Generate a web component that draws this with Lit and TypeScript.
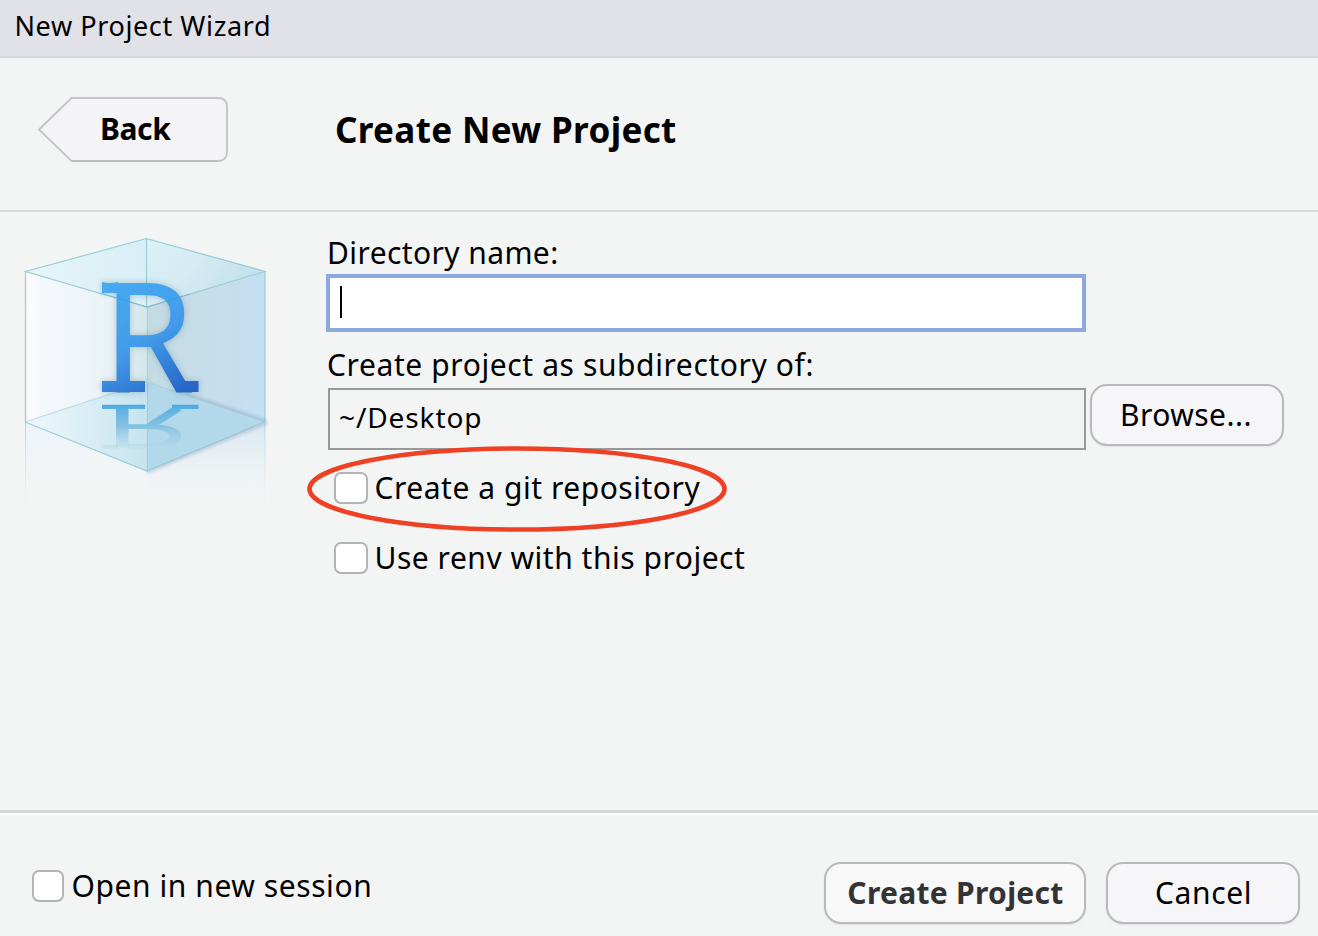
import { LitElement, html, css } from "lit";
import { customElement } from "lit/decorators.js";

@customElement("rstudio-cube")
class RstudioCube extends LitElement {
  static styles = css`
    :host { display: block; width: 300px; height: 310px; }
    svg { display: block; }
    .r { font-family: "Noto Sans", sans-serif; font-size: 154px; }
    .mark { filter: drop-shadow(0 0 3px rgba(60, 110, 130, .35)); }
  `;
  render() {
    return html`<svg width="300" height="310" viewBox="0 220 300 310">
      <defs>
        <linearGradient id="left" x1="0" x2="1" y1="0" y2="0"><stop offset="0" stop-color="#f0f4f9"/><stop offset=".04" stop-color="#fdfdff"/><stop offset=".12" stop-color="#f5f8fc"/><stop offset=".5" stop-color="#eff5f9"/><stop offset=".75" stop-color="#e6f1f5"/><stop offset="1" stop-color="#d3e6e9"/></linearGradient>
        <linearGradient id="right" x1="0" x2="1" y1="0" y2="0"><stop offset="0" stop-color="#c5dbe2"/><stop offset=".4" stop-color="#c6dde9"/><stop offset="1" stop-color="#c5dff3"/></linearGradient>
        <linearGradient id="topL" x1="0" x2="1" y1="0" y2="0"><stop offset="0" stop-color="#e6f5fa"/><stop offset="1" stop-color="#d9eef5"/></linearGradient>
        <linearGradient id="topR" x1="0" x2="1" y1="0" y2=".5"><stop offset="0" stop-color="#dcf0f6"/><stop offset=".5" stop-color="#d5eaf3"/><stop offset="1" stop-color="#bfe0ea"/></linearGradient>
        <linearGradient id="floorL" x1="0" x2="1" y1="0" y2="0"><stop offset="0" stop-color="#eef7fc"/><stop offset="1" stop-color="#c6e4ee"/></linearGradient>
        <linearGradient id="glyph" gradientUnits="userSpaceOnUse" x1="112" y1="288" x2="170" y2="398"><stop offset="0" stop-color="#46a9f2"/><stop offset=".5" stop-color="#429bea"/><stop offset="1" stop-color="#2766c6"/></linearGradient>
        <linearGradient id="glyphText" gradientUnits="userSpaceOnUse" x1="10" y1="-104" x2="70" y2="6"><stop offset="0" stop-color="#46a9f2"/><stop offset=".5" stop-color="#429bea"/><stop offset="1" stop-color="#2766c6"/></linearGradient>
        <linearGradient id="fadeL" x1="0" x2="0" y1="0" y2="1"><stop offset="0" stop-color="#edf3f9"/><stop offset="1" stop-color="#f3f5f5" stop-opacity="0"/></linearGradient>
        <linearGradient id="fadeR" gradientUnits="userSpaceOnUse" x1="0" x2="0" y1="422" y2="516"><stop offset="0" stop-color="#d9e8f3"/><stop offset="1" stop-color="#f3f5f5" stop-opacity="0"/></linearGradient>
        <linearGradient id="edge" gradientUnits="userSpaceOnUse" x1="0" x2="0" y1="422" y2="512"><stop offset="0" stop-color="#b5d5e0"/><stop offset="1" stop-color="#d5e3e8" stop-opacity="0"/></linearGradient>
        <linearGradient id="echo" gradientUnits="userSpaceOnUse" x1="0" x2="0" y1="392" y2="282"><stop offset="0" stop-color="#4ca8e0"/><stop offset=".12" stop-color="#5fb3e2"/><stop offset=".5" stop-color="#86c2e2"/><stop offset="1" stop-color="#b2d8e9" stop-opacity=".3"/></linearGradient>
        <filter id="soft" x="-20%" y="-20%" width="140%" height="140%"><feGaussianBlur stdDeviation="1.5"/></filter>
      </defs>
      <path d="M25 422L147 471V518H25Z" fill="url(#fadeL)"/>
      <path d="M147 471L265 422V518H147Z" fill="url(#fadeR)"/>
      <rect x="25" y="422" width="1" height="90" fill="url(#edge)"/>
      <rect x="264.500" y="422" width="1" height="90" fill="url(#edge)"/>
      <path d="M147 472L267 423" stroke="#a4b4d0" stroke-width="3" opacity=".6" filter="url(#soft)"/>
      <path d="M25 272L147 307V382L25 422Z" fill="url(#left)"/>
      <path d="M147 307L265 272V422L147 382Z" fill="url(#right)"/>
      <path d="M185 394L266 421" stroke="#8fa9cb" stroke-width="3" opacity=".6" filter="url(#soft)"/>
      <path d="M25 422L147 382V471Z" fill="url(#floorL)"/>
      <path d="M147 382L265 422L147 471Z" fill="#b2d8e9"/>
      <path d="M25 271L147 238V307Z" fill="url(#topL)"/>
      <path d="M147 238L265 271L147 307Z" fill="url(#topR)"/>
      <g fill="none" stroke="#8fc7cf" stroke-width="1.200" opacity=".85">
        <path d="M25.500 271.500L146.500 238.500L265 271.500L147 307ZM146.500 238.500V307M25.500 271V422M265 271V422M25 422L147 471L265 422"/>
        <path d="M25 422L147 382L265 422M147.500 307V471" opacity=".6"/>
      </g>
      <g fill="url(#echo)" stroke="none" transform="translate(0 561.500) scale(1 -.4)">
        <path d="M102 381h43v11h-43zM172 381h26.500v11h-26.500zM102 282h16v10h-16z"/>
        <rect x="116" y="285" width="12.500" height="97"/>
        <path d="M128 288H146Q175 290 175 314Q175 337 146 337H128" fill="none" stroke="url(#echo)" stroke-width="12"/>
        <path d="M149 337L177 382" stroke="url(#echo)" stroke-width="12"/>
      </g>
      <g class="mark">
        <path d="M102 381h43v11h-43zM181 381h17.500v11h-17.500zM102 282q8 2 16 0v11h-16z" fill="url(#glyph)"/>
        <text class="r" fill="url(#glyphText)" transform="translate(102.300 392) scale(.96 1)">R</text>
      </g>
      <path d="M101 293L147 307L190 294" fill="none" stroke="#3f8fc0" opacity=".35"/>
    </svg>`;
  }
}

@customElement("app-root")
class AppRoot extends LitElement {
  static styles = css`
    :host { display: flex; flex-direction: column; height: 936px; background: #f3f5f4; font-family: "Noto Sans", "Open Sans", sans-serif; font-size: 30px; line-height: 40px; color: #000; white-space: nowrap; overflow: hidden; }
    * { box-sizing: border-box; }
    .titlebar { height: 58px; background: #e1e2e7; border-bottom: 2px solid #d8d9df; padding: 6px 0 0 14.500px; font-size: 27px; letter-spacing: .6px; }
    .heading { height: 154px; border-bottom: 2px solid #d9dbda; display: flex; padding: 39px 0 0 38px; }
    .back { width: 190px; height: 65px; display: grid; }
    .back > * { grid-area: 1 / 1; }
    .back span { font-weight: bold; letter-spacing: -.4px; padding: 12px 0 0 62px; }
    h1 { margin: 13px 0 0 107px; font-size: 35px; letter-spacing: .35px; line-height: 40px; }
    .body { height: 598px; display: flex; padding-top: 8px; }
    .form { margin-left: 26px; padding-top: 12px; display: flex; flex-direction: column; }
    .label { padding: 1px 0 0 1px; height: 40px; }
    .name { letter-spacing: .4px; }
    .location { letter-spacing: .6px; }
    .dir { width: 760px; height: 58px; margin: 2px 0 12px; border: 4px solid #8ba9dc; background: #fff; padding: 8px 10px; }
    .caret { width: 2px; height: 32px; background: #000; }
    .row { display: flex; height: 66px; }
    .parent { width: 758px; height: 62px; margin: 4px 4px 0 2px; border: 2px solid #999; font-size: 28px; letter-spacing: .9px; padding: 7px 0 0 9px; }
    .btn { height: 62px; border: 2px solid #bababa; border-radius: 17px; background: #f6f6f9; box-shadow: 0 1px 2px rgba(0,0,0,.07); text-align: center; line-height: 58px; }
    .browse { width: 194px; letter-spacing: .45px; padding-right: 2px; }
    .check { display: flex; align-items: center; height: 40px; }
    .box { width: 34px; height: 32px; border: 2px solid #b3b3b3; border-radius: 7px; background: #fff; margin-right: 6.500px; }
    .check span { padding-bottom: 1px; }
    .git { margin: 18px 0 0 8px; letter-spacing: .53px; position: relative; }
    .ring { position: absolute; left: -28px; top: -24px; }
    .renv { margin: 30px 0 0 8px; letter-spacing: .52px; }
    .footer { height: 126px; border-top: 3px solid #d6d8d7; box-shadow: inset 0 2px #fff; display: flex; padding: 49px 18px 0 32px; }
    .session { margin-top: 4px; letter-spacing: .57px; }
    .session .box { width: 32px; margin-right: 7.500px; }
    .create { width: 262px; margin-left: auto; background: #f8f8f8; color: #333; font-weight: bold; letter-spacing: .29px; padding-left: 1px; }
    .cancel { width: 194px; margin-left: 20px; letter-spacing: .6px; padding-left: 1px; }
  `;
  render() {
    return html`
      <div class="titlebar">New Project Wizard</div>
      <div class="heading">
        <div class="back">
          <svg width="190" height="65" fill="none"><path d="M1 32.500L33.500 1H180Q189 1 189 10V55Q189 64 180 64H33.500Z" fill="#f4f4f6" stroke="#c3c5c4" stroke-width="1.800"/><path d="M34 64H180" stroke="#b5b8b7"/></svg>
          <span>Back</span>
        </div>
        <h1>Create New Project</h1>
      </div>
      <div class="body">
        <rstudio-cube></rstudio-cube>
        <div class="form">
          <div class="label name">Directory name:</div>
          <div class="dir"><div class="caret"></div></div>
          <div class="label location">Create project as subdirectory of:</div>
          <div class="row"><div class="parent">~/Desktop</div><div class="btn browse">Browse...</div></div>
          <div class="check git"><div class="box"></div><span>Create a git repository</span>
            <svg class="ring" width="424" height="90" fill="none"><ellipse cx="211" cy="45" rx="207.500" ry="40.500" stroke="#ee4024" stroke-width="4.600"/></svg>
          </div>
          <div class="check renv"><div class="box"></div><span>Use renv with this project</span></div>
        </div>
      </div>
      <div class="footer">
        <div class="check session"><div class="box"></div><span>Open in new session</span></div>
        <div class="btn create">Create Project</div>
        <div class="btn cancel">Cancel</div>
      </div>`;
  }
}
